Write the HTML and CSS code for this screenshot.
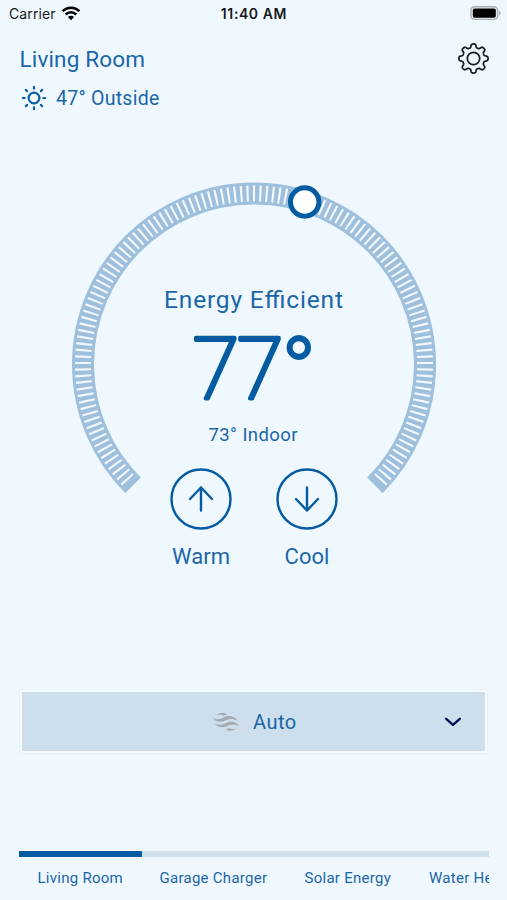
FILE: index.html
```html
<!DOCTYPE html>
<html lang="en">
<head>
<meta charset="utf-8">
<title>Thermostat</title>
<link rel="stylesheet" href="styles.css">
</head>
<body>
<div class="screen">
  <div class="status">
    <div class="carrier"><span>Carrier</span>
      <svg width="20" height="15" viewBox="0 0 20 15" fill="none" stroke="#000" stroke-width="2.5"><path d="M1.6 5.2a12 12 0 0 1 16.8 0M4.7 8.5a7.6 7.6 0 0 1 10.6 0"/><path d="M10 14.2 6.9 11.1a4.5 4.5 0 0 1 6.2 0Z" fill="#000" stroke="none"/></svg>
    </div>
    <div class="clock">11:40 AM</div>
    <svg class="battery" width="32" height="15" viewBox="0 0 32 15"><rect x="1" y=".8" width="26.6" height="12.6" rx="3.6" fill="#edf3f6" stroke="#a9b0b4" stroke-width="1.4"/><rect x="2.8" y="2.5" width="23" height="9.2" rx="1.8"/><path d="M29 4.8c2.2.7 2.2 4.1 0 4.8z" fill="#a9b0b4"/></svg>
  </div>
  <header class="head">
    <h1>Living Room</h1>
    <svg class="gear" width="31" height="31" viewBox="-16 -16 32 32" fill="none" stroke="#171b1f" stroke-width="1.8" stroke-linejoin="round"><circle r="6.4"/><path id="gear" d=""/></svg>
  </header>
  <div class="outside">
    <svg width="26" height="26" viewBox="-13 -13 26 26" fill="none" stroke="#0b5fa5" stroke-width="2.2" stroke-linecap="round"><circle r="5.4"/><path d="M0-9.3V-11.2M0 9.3V11.2M-9.3 0H-11.2M9.3 0H11.2M-6.9-6.9-8.2-8.2M6.9-6.9 8.2-8.2M-6.9 6.9-8.2 8.2M6.9 6.9 8.2 8.2"/></svg>
    <span>47° Outside</span>
  </div>
  <svg class="dial" width="372" height="322" viewBox="68 178 372 322">
    <path class="ring" d="M133.1 485.4A171 171 0 1 1 374.9 485.4"/>
    <path class="ticks" pathLength="1243.3" d="M127.9 480A171 171 0 1 1 380.1 480"/>
    <circle class="knob" cx="304.7" cy="202" r="14.2"/>
    <text class="mode" x="164" y="308" textLength="179">Energy Efficient</text>
    <text class="temp" x="192.8 237" y="399">77</text>
    <text class="degree" x="280.3" y="405.5">°</text>
    <text class="indoor" x="208.5" y="440.5" textLength="89">73° Indoor</text>
  </svg>
  <div class="actions">
    <div class="action">
      <svg width="62" height="62" viewBox="-31 -31 62 62"><circle r="29.5"/><path d="M0 11.5v-23M-11 0 0-11.5 11 0"/></svg>
      <span>Warm</span>
    </div>
    <div class="action">
      <svg width="62" height="62" viewBox="-31 -31 62 62"><circle r="29.5"/><path d="M0-11.5v23M-11 0 0 11.5 11 0"/></svg>
      <span class="cool">Cool</span>
    </div>
  </div>
  <div class="select">
    <svg width="28" height="20" viewBox="0 0 28 20" fill="#a5abb0"><path d="M4 3.2C8 .2 12 .6 15 2.3L11.8 3.7C9.5 2.7 7 2.4 4 3.2Z"/><path d="M.5 5.5C5 8.2 8 7.5 12 5.3C17 2.7 22 3.8 26 8.7C21 6.5 17.5 6.5 13.5 8.5C8.5 10.8 3.5 10 .5 5.5Z"/><path d="M2.3 11.3C7 13.8 10 13 14 11C19 8.6 24 9.7 27.5 14.2C22.5 12.3 19 12.3 15.3 14C10.3 16.2 5.5 15.7 2.3 11.3Z"/><path d="M13.5 17.7 17 16.2C19 17 21.5 17.2 24 16.6C20.5 19.4 17 19.3 13.5 17.7Z"/></svg>
    <span>Auto</span>
    <svg class="chevron" width="18" height="12" viewBox="0 0 18 12" fill="none" stroke="#0c1054" stroke-width="2.4" stroke-linecap="round" stroke-linejoin="round"><path d="M2.2 2.8 9 8.8 15.8 2.8"/></svg>
  </div>
  <nav class="tabs">
    <div class="track"><div class="active"></div></div>
    <div class="labels"><span class="t1">Living Room</span><span class="t2">Garage Charger</span><span class="t3">Solar Energy</span><span class="t4">Water Heater</span></div>
  </nav>
</div>
<script src="gear.js"></script>
</body>
</html>
```
FILE: gear.js
```js
// Eight rounded teeth, traced as a smooth radial outline.
const points = [];
for (let i = 0; i < 240; i++) {
  const a = i * Math.PI / 120;
  const wave = Math.tanh(2.1 * Math.cos(8 * a)) / Math.tanh(2.1);
  const r = 13.2 + 1.8 * wave;
  points.push((r * Math.cos(a)).toFixed(2) + " " + (r * Math.sin(a)).toFixed(2));
}
document.getElementById("gear").setAttribute("d", "M" + points.join("L") + "Z");
```
FILE: styles.css
```css
* { box-sizing: border-box; }
body { margin: 0; background: #f0f8ff; font-family: Roboto, "Liberation Sans", sans-serif; color: #1b66a8; }
svg { display: block; flex: none; }
.screen { width: 507px; height: 900px; overflow: hidden; display: flex; flex-direction: column; }
.screen > * { flex: none; }
.status { height: 27px; padding: 0 5px 0 9px; display: grid; grid-template-columns: 1fr auto 1fr; align-items: center; color: #17191b; font: 14px/27px Inter, sans-serif; }
.carrier { display: flex; align-items: center; gap: 5px; letter-spacing: .1px; }
.clock { font-weight: 600; letter-spacing: .6px; padding-right: 3px; }
.battery { justify-self: end; }
.head { height: 63px; padding: 0 18px 0 19.5px; display: flex; align-items: center; justify-content: space-between; }
h1 { margin: 0; font-size: 22.5px; font-weight: 400; letter-spacing: .15px; }
.outside { height: 16px; margin-left: 21px; display: flex; align-items: center; gap: 9px; font-size: 19.5px; letter-spacing: .25px; }
.dial { margin: 72px 0 0 68px; }
.ring { fill: none; stroke: #9fc0dd; stroke-width: 22; }
.ticks { fill: none; stroke: #f3f9ff; stroke-width: 16; stroke-dasharray: 3.3 6.7; }
.knob { fill: #fff; stroke: #045ba1; stroke-width: 5; }
.dial text { fill: #1b66a8; }
.dial .mode { font-size: 24.5px; }
.dial .temp { font-size: 85px; font-weight: 100; fill: #045ba1; stroke: #045ba1; stroke-width: 4; stroke-linejoin: round; }
.dial .degree { font-size: 99px; font-weight: 400; fill: #045ba1; }
.dial .indoor { font-size: 18.5px; }
.actions { margin: -32px 0 0 170px; display: flex; gap: 44px; }
.action { width: 62px; display: flex; flex-direction: column; align-items: center; font-size: 22px; line-height: 28px; gap: 13px; }
.action svg { fill: none; stroke: #045ba1; stroke-width: 2.4; stroke-linecap: round; stroke-linejoin: round; }
.select { margin: 119px 20px 0; height: 63px; display: flex; align-items: center; padding-left: 190px; background: #cddfec; border: 2px solid #f5faff; outline: 1px solid #e8f1f7; font-size: 20px; letter-spacing: .5px; }
.select span { margin-left: 13px; flex: 1; }
.chevron { margin-right: 23px; }
.tabs { margin: 98px 18px 0 19px; overflow: hidden; }
.track { height: 6px; background: #d0dfec; }
.active { width: 123px; height: 6px; background: #045ba1; }
.labels { display: flex; padding-left: 18.5px; font-size: 15px; line-height: 43px; white-space: nowrap; letter-spacing: .27px; }
.labels span { flex: none; }
.t1 { width: 122px; }
.t2 { width: 145px; }
.t3 { width: 124.5px; }
```
